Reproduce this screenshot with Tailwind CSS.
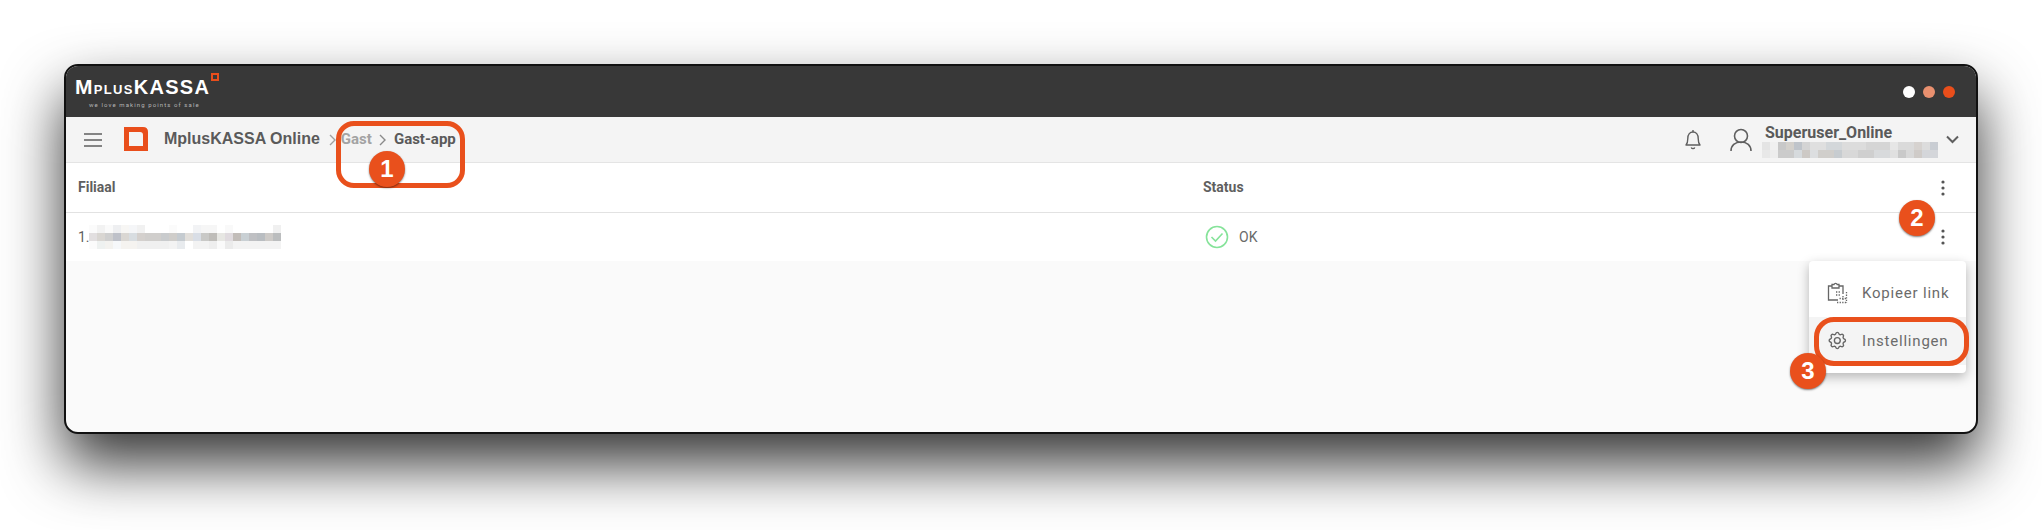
<!DOCTYPE html>
<html lang="nl">
<head>
<meta charset="UTF-8">
<title>MplusKASSA Online - Gast-app</title>
<script src="https://cdn.jsdelivr.net/npm/@tailwindcss/browser@4"></script>
</head>
<body class="bg-white font-['Roboto',sans-serif] text-[#5f5f5f]">
<div class="relative w-[2042px] h-[530px] overflow-hidden pl-[64px] pt-[64px]">

  <!-- Window -->
  <div class="w-[1914px] h-[370px] flex flex-col overflow-hidden rounded-[14px] border-2 border-[#111] bg-[#fafafa] shadow-[0_30px_60px_rgba(0,0,0,0.8)]">
    <!-- Title bar -->
    <div class="h-[51px] shrink-0 bg-[#383838] flex items-center justify-between pl-[9px] pr-[21px]">
      <div class="relative w-[160px] h-[51px]">
        <div class="absolute left-0 top-[9px] flex items-baseline font-['Liberation_Sans',sans-serif] font-bold text-white leading-[24px] tracking-[1.3px] whitespace-nowrap">
          <span class="text-[21px]">M</span><span class="text-[13px]">PLUS</span><span class="text-[20px]">KASSA</span>
        </div>
        <div class="absolute left-[136px] top-[7px] w-[8px] h-[8px] border-2 border-[#e94e1b]"></div>
        <div class="absolute left-[14px] top-[35px] text-[6px] leading-[8px] tracking-[1.1px] text-[#b5b5b5] whitespace-nowrap">we love making points of sale</div>
      </div>
      <div class="flex items-center gap-[8px]">
        <span class="w-[12px] h-[12px] rounded-full bg-white"></span>
        <span class="w-[12px] h-[12px] rounded-full bg-[#e9906f]"></span>
        <span class="w-[12px] h-[12px] rounded-full bg-[#e94e1b]"></span>
      </div>
    </div>

    <!-- Nav bar -->
    <div class="h-[46px] shrink-0 bg-[#f4f4f4] border-b border-[#e4e4e4] flex items-center pl-[17px] pr-[17px]">
      <svg class="w-[20px] h-[16px] shrink-0" viewBox="0 0 20 16" fill="none" stroke="#5f5f5f" stroke-width="1.5"><path d="M1 2h18M1 8h18M1 14h18"/></svg>
      <svg class="w-[24px] h-[24px] shrink-0 ml-[21px] -mt-[1px]" viewBox="0 0 24 24"><path fill="#e94e1b" d="M0 0h19q5 0 5 5v19H0z"/><path fill="#f4f4f4" d="M5 5h11q3 0 3 3v11H5z"/></svg>
      <span class="ml-[16px] -mt-[2px] text-[16px] font-bold font-['Liberation_Sans',sans-serif] text-[#5a5a5a] whitespace-nowrap">MplusKASSA Online</span>
      <svg class="w-[8px] h-[12px] ml-[9px] shrink-0" viewBox="0 0 8 12" fill="none" stroke="#a0a0a0" stroke-width="1.4"><path d="M1 1l5 5-5 5"/></svg>
      <span class="ml-[4px] text-[15px] font-bold text-[#a3a3a3]">Gast</span>
      <svg class="w-[8px] h-[12px] ml-[7px] shrink-0" viewBox="0 0 8 12" fill="none" stroke="#8a8a8a" stroke-width="1.4"><path d="M1 1l5 5-5 5"/></svg>
      <span class="ml-[7px] text-[15px] font-bold text-[#5a5a5a] whitespace-nowrap">Gast-app</span>

      <svg class="ml-auto w-[18px] h-[22px] shrink-0" viewBox="0 0 18 22" fill="none" stroke="#5f5f5f" stroke-width="1.4" stroke-linejoin="round"><path d="M2 16c1.400-1.500 1.800-3 1.800-6.500C3.800 5.500 6 3 9 3s5.200 2.500 5.200 6.500c0 3.500.4 5 1.800 6.500z"/><path d="M9 1v2M7.200 18.500a2 2 0 0 0 3.600 0"/></svg>
      <svg class="ml-[28px] w-[22px] h-[24px] shrink-0" viewBox="0 0 22 24" fill="none" stroke="#5f5f5f" stroke-width="1.600"><circle cx="11" cy="8" r="6.500"/><path d="M1 23c0-5.500 4-9 10-9s10 3.500 10 9"/></svg>
      <div class="ml-[10px] w-[181px] shrink-0 mt-[3px]">
        <div class="pl-[3px] text-[16px] leading-[18px] font-bold text-[#5a5a5a]">Superuser_Online</div>
        <svg class="block" width="176" height="16" viewBox="0 0 22 2" shape-rendering="crispEdges">
          <path fill="#e4e4e4" d="M0 0h1v1H0z"/><path fill="#f0f0f0" d="M1 0h1v1H1z"/><path fill="#c8c8c8" d="M2 0h1v1H2z"/><path fill="#d3d0cb" d="M3 0h1v1H3z"/><path fill="#bfc4ca" d="M4 0h1v1H4z"/><path fill="#d4d4d4" d="M5 0h1v1H5z"/><path fill="#dfdfdf" d="M6 0h2v1H6z"/><path fill="#d3d7da" d="M8 0h2v1H8z"/><path fill="#dcdcdc" d="M10 0h3v1h-3z"/><path fill="#d5d5d5" d="M13 0h3v1h-3z"/><path fill="#e6e6e6" d="M16 0h1v1h-1z"/><path fill="#dadada" d="M17 0h2v1h-2z"/><path fill="#d6d2cf" d="M19 0h1v1h-1z"/><path fill="#dcdcdc" d="M20 0h1v1h-1z"/><path fill="#c9cdd3" d="M21 0h1v1h-1z"/>
          <path fill="#e8e8e8" d="M0 1h1v1H0z"/><path fill="#ededed" d="M1 1h1v1H1z"/><path fill="#cbcbcb" d="M2 1h2v1H2z"/><path fill="#d6dadd" d="M4 1h1v1H4z"/><path fill="#cdc9c5" d="M5 1h1v1H5z"/><path fill="#dcdee0" d="M6 1h1v1H6z"/><path fill="#d0cecb" d="M7 1h2v1H7z"/><path fill="#c7ccd0" d="M9 1h1v1H9z"/><path fill="#d8d8d8" d="M10 1h2v1h-2z"/><path fill="#cfcfcf" d="M12 1h2v1h-2z"/><path fill="#d8dadc" d="M14 1h2v1h-2z"/><path fill="#e0e0e0" d="M16 1h1v1h-1z"/><path fill="#c9c9c9" d="M17 1h1v1h-1z"/><path fill="#d8d8d8" d="M18 1h1v1h-1z"/><path fill="#cfcbc8" d="M19 1h1v1h-1z"/><path fill="#d4d6da" d="M20 1h2v1h-2z"/>
        </svg>
      </div>
      <svg class="ml-[3px] w-[13px] h-[9px] shrink-0" viewBox="0 0 13 9" fill="none" stroke="#5f5f5f" stroke-width="2"><path d="M1 1.500l5.500 5.500L12 1.500"/></svg>
    </div>

    <!-- Table header -->
    <div class="h-[50px] shrink-0 bg-white border-b border-[#e2e2e2] grid grid-cols-[1125px_1fr_40px] items-center pl-[12px]">
      <span class="text-[14px] font-bold text-[#5f5f5f]">Filiaal</span>
      <span class="text-[14px] font-bold text-[#5f5f5f]">Status</span>
      <svg class="w-[4px] h-[16px] ml-[5px]" viewBox="0 0 4 16" fill="#555"><circle cx="2" cy="2" r="1.600"/><circle cx="2" cy="8" r="1.600"/><circle cx="2" cy="14" r="1.600"/></svg>
    </div>

    <!-- Table row -->
    <div class="h-[48px] shrink-0 bg-white grid grid-cols-[1125px_1fr_40px] items-center pl-[12px]">
      <div class="flex items-center">
        <span class="text-[14px] text-[#5f5f5f]">1.</span>
        <svg class="block -ml-[1px]" width="192" height="24" viewBox="0 0 24 3" shape-rendering="crispEdges">
          <path fill="#fbfbfb" d="M0 0h1v1H0z"/><path fill="#f2f2f2" d="M1 0h1v1H1z"/><path fill="#fafafa" d="M2 0h1v1H2z"/><path fill="#eeeff1" d="M3 0h1v1H3z"/><path fill="#f7f6f4" d="M4 0h1v1H4z"/><path fill="#f5f6f8" d="M5 0h1v1H5z"/><path fill="#f1f1f1" d="M6 0h1v1H6z"/><path fill="#fbfbfb" d="M10 0h1v1h-1z"/><path fill="#f2f3f5" d="M13 0h1v1h-1z"/><path fill="#f6f6f6" d="M14 0h2v1h-2z"/><path fill="#f9f9f9" d="M17 0h1v1h-1z"/><path fill="#f0f0f0" d="M23 0h1v1h-1z"/>
          <path fill="#e2dfe0" d="M0 1h1v1H0z"/><path fill="#d9d6d2" d="M1 1h1v1H1z"/><path fill="#cfcfcf" d="M2 1h1v1H2z"/><path fill="#bec1c9" d="M3 1h1v1H3z"/><path fill="#dad7d3" d="M4 1h1v1H4z"/><path fill="#d8dde1" d="M5 1h1v1H5z"/><path fill="#d4d0cd" d="M6 1h1v1H6z"/><path fill="#d0cecc" d="M7 1h2v1H7z"/><path fill="#c9cbcd" d="M9 1h1v1H9z"/><path fill="#cfcdca" d="M10 1h1v1H10z"/><path fill="#c5cbd0" d="M11 1h1v1H11z"/><path fill="#e2dfdb" d="M12 1h1v1H12z"/><path fill="#d9dee6" d="M13 1h1v1H13z"/><path fill="#c9c9c7" d="M14 1h1v1H14z"/><path fill="#bfbdb9" d="M15 1h1v1H15z"/><path fill="#e7e7e3" d="M16 1h1v1H16z"/><path fill="#e0dbdf" d="M17 1h1v1H17z"/><path fill="#c2bdb9" d="M18 1h1v1H18z"/><path fill="#c9d0d4" d="M19 1h1v1H19z"/><path fill="#bfc0c3" d="M20 1h1v1H20z"/><path fill="#b9bdc1" d="M21 1h1v1H21z"/><path fill="#cdcac7" d="M22 1h1v1H22z"/><path fill="#bbbdbe" d="M23 1h1v1H23z"/>
          <path fill="#fbfbfb" d="M0 2h1v1H0z"/><path fill="#eef1f0" d="M1 2h1v1H1z"/><path fill="#f3f2ef" d="M2 2h1v1H2z"/><path fill="#f6f8fa" d="M3 2h1v1H3z"/><path fill="#f5f3f0" d="M4 2h2v1H4z"/><path fill="#f0f0f0" d="M6 2h4v1H6z"/><path fill="#f3f3f3" d="M10 2h1v1H10z"/><path fill="#e8ebee" d="M11 2h1v1H11z"/><path fill="#f3f3f3" d="M13 2h2v1H13z"/><path fill="#eeeeee" d="M15 2h1v1H15z"/><path fill="#fafafa" d="M16 2h1v1H16z"/><path fill="#ebebeb" d="M17 2h1v1H17z"/><path fill="#f3f3f3" d="M18 2h6v1H18z"/>
        </svg>
      </div>
      <div class="flex items-center">
        <svg class="w-[24px] h-[24px] ml-[2px]" viewBox="0 0 24 24" fill="none" stroke="#86e39a" stroke-width="1.600"><circle cx="12" cy="12" r="10.500"/><path d="M6.500 12l4 4 7-7.500"/></svg>
        <span class="ml-[10px] text-[14px] text-[#6a6a6a]">OK</span>
      </div>
      <svg class="w-[4px] h-[16px] ml-[5px]" viewBox="0 0 4 16" fill="#555"><circle cx="2" cy="2" r="1.600"/><circle cx="2" cy="8" r="1.600"/><circle cx="2" cy="14" r="1.600"/></svg>
    </div>
  </div>

  <!-- Dropdown menu -->
  <div class="absolute left-[1809px] top-[261px] w-[157px] py-2 bg-white rounded-[4px] shadow-[0_4px_12px_rgba(0,0,0,0.28)] text-[15px] tracking-[0.8px] text-[#6b6b6b]">
    <div class="h-[48px] flex items-center pl-[18px] gap-[13px]">
      <svg class="w-[22px] h-[22px] shrink-0" viewBox="0 0 22 22" fill="none" stroke="#666" stroke-width="1.300"><path d="M11 18H1.500V4H5M12 4h4v8"/><path d="M5 2.500h2a1.700 1.700 0 0 1 3.200 0H12v3.500H5z"/><path stroke-dasharray="1.300 1.300" d="M9 10h4M9 13h4M19.500 10v11M10 20.500h10M16 14v5M12.500 16.500h7"/></svg>
      <span>Kopieer link</span>
    </div>
    <div class="h-[48px] flex items-center pl-[18px] gap-[13px] bg-[#f4f4f4]">
      <svg class="w-[22px] h-[22px] shrink-0" viewBox="0 0 24 24" fill="none" stroke="#666" stroke-width="1.500" stroke-linejoin="round"><path d="M9.600 3.900c.4-1.800 2.900-1.800 3.300 0a1.700 1.700 0 0 0 2.500 1c1.600-1 3.300.800 2.400 2.400a1.700 1.700 0 0 0 1 2.500c1.800.4 1.800 2.900 0 3.300a1.700 1.700 0 0 0-1 2.500c1 1.600-.8 3.300-2.400 2.400a1.700 1.700 0 0 0-2.500 1c-.4 1.800-2.900 1.800-3.300 0a1.700 1.700 0 0 0-2.500-1c-1.600 1-3.300-.8-2.400-2.400a1.700 1.700 0 0 0-1-2.500c-1.800-.4-1.800-2.900 0-3.300a1.700 1.700 0 0 0 1-2.500c-1-1.600.8-3.300 2.400-2.400a1.700 1.700 0 0 0 2.500-1z"/><circle cx="11.250" cy="11.500" r="3.200"/></svg>
      <span>Instellingen</span>
    </div>
  </div>

  <!-- Annotation: breadcrumb -->
  <div class="absolute left-[336px] top-[121px] w-[129px] h-[67px] rounded-[18px] border-[5px] border-[#e9501c]"></div>
  <div class="absolute left-[1814px] top-[317px] w-[155px] h-[49px] rounded-[20px] border-[5px] border-[#e9501c]"></div>

  <!-- Annotation numbers -->
  <div class="absolute left-[369px] top-[151px] w-[36px] h-[36px] rounded-full bg-[#e9501c] flex items-center justify-center text-white text-[24px] font-bold font-['Liberation_Sans',sans-serif] shadow-[0_1px_2px_rgba(0,0,0,0.5)]">1</div>
  <div class="absolute left-[1899px] top-[200px] w-[36px] h-[36px] rounded-full bg-[#e9501c] flex items-center justify-center text-white text-[24px] font-bold font-['Liberation_Sans',sans-serif] shadow-[0_1px_2px_rgba(0,0,0,0.5)]">2</div>
  <div class="absolute left-[1790px] top-[353px] w-[36px] h-[36px] rounded-full bg-[#e9501c] flex items-center justify-center text-white text-[24px] font-bold font-['Liberation_Sans',sans-serif] shadow-[0_1px_2px_rgba(0,0,0,0.5)]">3</div>
</div>
</body>
</html>
